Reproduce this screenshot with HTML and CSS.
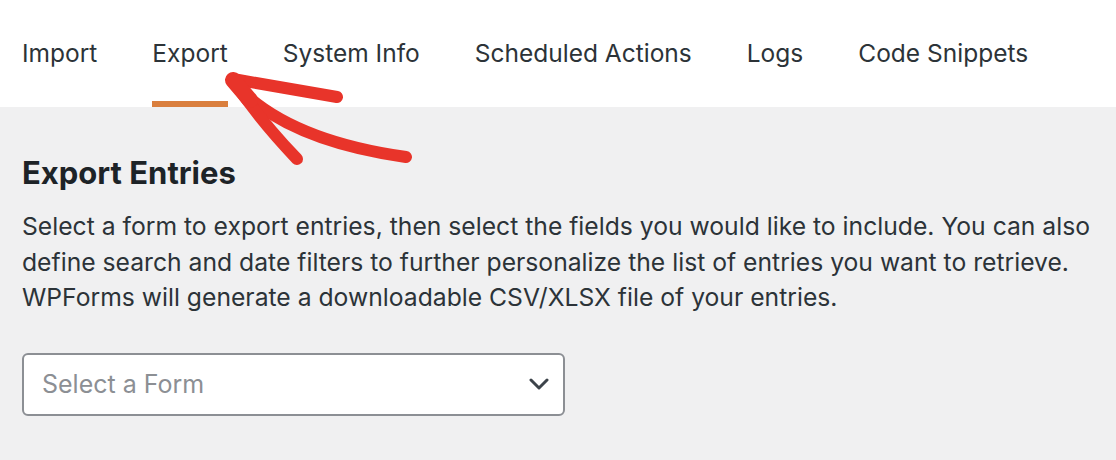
FILE: index.html
```html
<!DOCTYPE html>
<html>
<head>
<meta charset="utf-8">
<link rel="stylesheet" href="styles.css">
</head>
<body>
<nav class="tabs">
  <a class="tab">Import</a>
  <a class="tab active">Export</a>
  <a class="tab">System Info</a>
  <a class="tab">Scheduled Actions</a>
  <a class="tab">Logs</a>
  <a class="tab">Code Snippets</a>
</nav>
<main class="content">
  <h2 class="title">Export Entries</h2>
  <p class="desc">Select a form to export entries, then select the fields you would like to include. You can also define search and date filters to further personalize the list of entries you want to retrieve. WPForms will generate a downloadable CSV/XLSX file of your entries.</p>
  <div class="select">
    <span class="placeholder">Select a Form</span>
    <svg class="chev" width="20" height="12" viewBox="0 0 20 12"><path d="M2 2 L10 10 L18 2" fill="none" stroke="#3c434a" stroke-width="3" stroke-linecap="round" stroke-linejoin="round"/></svg>
  </div>
</main>
<svg class="arrow" width="1116" height="460" viewBox="0 0 1116 460">
  <g fill="none" stroke="#e8342a" stroke-linecap="round" stroke-linejoin="round">
    <path d="M233 82 C 265 118, 320 145, 406 157" stroke-width="12"/>
    <path d="M233 79 L 337 97" stroke-width="12"/>
    <path d="M233 80 Q 258 118 297 159" stroke-width="12"/>
    <path d="M233 80 L 250 100" stroke-width="16"/>
  </g>
</svg>
</body>
</html>
```
FILE: styles.css
```css
html, body {
  margin: 0;
  padding: 0;
}
body {
  width: 1116px;
  height: 460px;
  overflow: hidden;
  background: #f0f0f1;
  font-family: Inter, "Noto Sans", sans-serif;
  color: #1d2327;
  position: relative;
}
.tabs {
  background: #fff;
  height: 107px;
  box-sizing: border-box;
  display: flex;
  gap: 55px;
  padding-left: 22px;
}
.tab {
  box-sizing: border-box;
  height: 107px;
  padding-top: 37px;
  font-size: 24.5px;
  line-height: 32px;
  color: #2c3338;
  border-bottom: 6px solid transparent;
}
.tab.active {
  border-bottom-color: #da7f3e;
}
.content {
  padding: 48px 22px 0;
}
.title {
  margin: 0;
  font-size: 31px;
  line-height: 36px;
  font-weight: 700;
  color: #1d2327;
}
.desc {
  margin: 18px 0 0;
  font-size: 24.7px;
  line-height: 35.5px;
  color: #2c3338;
}
.select {
  margin-top: 37px;
  width: 543px;
  height: 63px;
  box-sizing: border-box;
  background: #fff;
  border: 2px solid #8c8f94;
  border-radius: 6px;
  display: flex;
  align-items: center;
  justify-content: space-between;
  padding: 0 14px 0 18px;
}
.placeholder {
  font-size: 25px;
  color: #8c8f94;
}
.arrow {
  position: absolute;
  left: 0;
  top: 0;
  pointer-events: none;
}
```
